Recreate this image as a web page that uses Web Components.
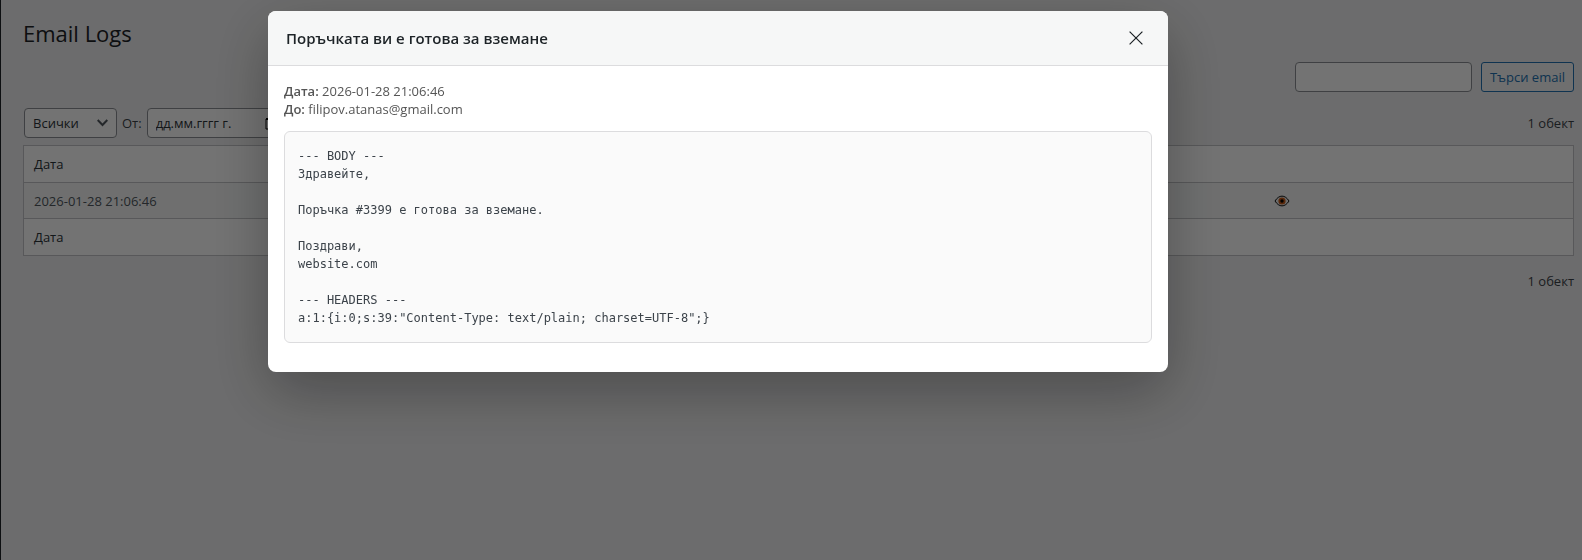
<!DOCTYPE html>
<html lang="bg">
<head>
    <meta charset="UTF-8">
    <meta name="viewport" content="width=device-width, initial-scale=1.0">
    <title>Email Logs</title>
    <style>
      body{
        margin: 0;
        min-height: 100vh;
        display: flex;
        background: #f0f0f1;
        color: #3c434a;
        font: 13px/18px "Open Sans", "Noto Sans", sans-serif;
      }
    </style>
</head>
<body>
  <log-page heading="Email Logs">
    <log-search slot="search" label="Търси email"></log-search>
    <log-filters slot="filters"></log-filters>
    <span slot="count">1 обект</span>
    <log-table date="2026-01-28 21:06:46"></log-table>
    <span slot="total">1 обект</span>
  </log-page>

  <log-modal>
    <span slot="title">Поръчката ви е готова за вземане</span>
    <log-field slot="meta" label="Дата:">2026-01-28 21:06:46</log-field>
    <log-field slot="meta" label="До:">filipov.atanas@gmail.com</log-field>
    <log-source>--- BODY ---
Здравейте,

Поръчка #3399 е готова за вземане.

Поздрави,
website.com

--- HEADERS ---
a:1:{i:0;s:39:"Content-Type: text/plain; charset=UTF-8";}</log-source>
  </log-modal>

  <script>
    class LogPage extends HTMLElement{
      constructor(){
        super();
        this.attachShadow({mode:'open'}).innerHTML = `
          <style>
            :host{
              flex: 1;
              box-sizing: border-box;
              min-width: 0;
              padding: 16px 8px 16px 22px;
              border-left: 1px solid #1d2327;
            }
            h1{
              margin: 0 0 12px;
              font-size: 22px;
              line-height: 34px;
              font-weight: 400;
              color: #1d2327;
            }
            .search{
              display: flex;
              justify-content: flex-end;
              margin-bottom: 16px;
            }
            .nav{
              display: flex;
              justify-content: space-between;
              align-items: center;
              min-height: 30px;
            }
            .top{ margin-bottom: 7px; }
            .bottom{ margin-top: 10px; }
          </style>
          <h1></h1>
          <div class="search"><slot name="search"></slot></div>
          <div class="nav top"><slot name="filters"></slot><slot name="count"></slot></div>
          <slot></slot>
          <div class="nav bottom"><span></span><slot name="total"></slot></div>`;
      }

      connectedCallback(){
        this.shadowRoot.querySelector('h1').textContent = this.getAttribute('heading');
      }
    }
    customElements.define('log-page', LogPage);

    class LogSearch extends HTMLElement{
      constructor(){
        super();
        this.attachShadow({mode:'open'}).innerHTML = `
          <style>
            :host{ display: block; }
            form{ display: flex; gap: 9px; }
            input, button{
              box-sizing: border-box;
              height: 30px;
              margin: 0;
              border-radius: 4px;
              font: inherit;
            }
            input{
              width: 177px;
              padding: 0 8px;
              border: 1px solid #8c8f94;
              background: #fff;
            }
            button{
              min-width: 92px;
              padding: 0 8px;
              border: 1px solid #2271b1;
              border-radius: 3px;
              background: #f6f7f7;
              color: #2271b1;
              white-space: nowrap;
            }
          </style>
          <form><input type="search"><button type="button"></button></form>`;
      }

      connectedCallback(){
        let label = this.getAttribute('label');
        this.shadowRoot.querySelector('input').setAttribute('aria-label', label);
        this.shadowRoot.querySelector('button').textContent = label;
      }
    }
    customElements.define('log-search', LogSearch);

    class LogFilters extends HTMLElement{
      constructor(){
        super();
        this.attachShadow({mode:'open'}).innerHTML = `
          <style>
            :host{
              display: flex;
              align-items: center;
              gap: 5px;
              padding-left: 1px;
            }
            .box{
              box-sizing: border-box;
              display: grid;
              align-items: center;
              height: 30px;
              border: 1px solid #8c8f94;
              border-radius: 4px;
              background: #fff;
              color: #2c3338;
            }
            .box > *{ grid-area: 1 / 1; }
            .pick{ width: 93px; }
            .day{ width: 142px; }
            select, input{
              appearance: none;
              box-sizing: border-box;
              width: 100%;
              height: 28px;
              margin: 0;
              padding: 0 8px;
              border: 0;
              background: none;
              color: inherit;
              font: inherit;
            }
            input::placeholder{ color: inherit; opacity: 1; }
            svg{ justify-self: end; margin-right: 8px; pointer-events: none; }
          </style>
          <div class="box pick">
            <select aria-label="Статус"><option>Всички</option></select>
            <svg width="11" height="8" viewBox="0 0 11 8" fill="none" stroke="#50575e" stroke-width="2"><path d="M.7 1l4.8 5 4.8-5"/></svg>
          </div>
          <label for="from">От:</label>
          <div class="box day">
            <input id="from" type="text" placeholder="дд.мм.гггг г.">
            <svg width="15" height="14" viewBox="0 0 15 14" fill="none" stroke="#000"><path d="M1 3h13v10H1z"/><path d="M4 0v3M11 0v3M1 3h13" stroke-width="2"/></svg>
          </div>`;
      }
    }
    customElements.define('log-filters', LogFilters);

    class LogTable extends HTMLElement{
      constructor(){
        super();
        this.attachShadow({mode:'open'}).innerHTML = `
          <style>
            :host{ display: block; }
            table{
              width: 100%;
              table-layout: fixed;
              border-collapse: collapse;
              border: 1px solid #c3c4c7;
              background: #fff;
            }
            th, td{
              box-sizing: border-box;
              height: 36px;
              padding: 0 10px;
              text-align: left;
              font-weight: 400;
            }
            th{ height: 37px; color: #2c3338; }
            tbody tr{
              background: #f6f7f7;
              border: solid #c3c4c7;
              border-width: 1px 0;
            }
            td{ color: #50575e; }
            button{
              display: block;
              margin: 0;
              padding: 0;
              border: 0;
              background: none;
            }
            svg{ display: block; }
          </style>
          <table>
            <thead><tr><th scope="col">Дата</th><th></th><th></th><th></th><th></th></tr></thead>
            <tbody><tr>
              <td class="date"></td><td></td><td></td><td></td>
              <td><button type="button" aria-label="Преглед">
                <svg width="16" height="12" viewBox="0 0 16 12">
                  <path d="M1 6c4-6.500 10-6.500 14 0-4 6.500-10 6.500-14 0z" fill="#eee" stroke="#111"/>
                  <circle cx="8" cy="6" r="3.600" fill="#c85a17"/>
                  <circle cx="8" cy="6" r="1.700" fill="#000"/>
                </svg>
              </button></td>
            </tr></tbody>
            <tfoot><tr><th scope="col">Дата</th><th></th><th></th><th></th><th></th></tr></tfoot>
          </table>`;
      }

      connectedCallback(){
        this.shadowRoot.querySelector('.date').textContent = this.getAttribute('date');
      }
    }
    customElements.define('log-table', LogTable);

    class LogModal extends HTMLElement{
      constructor(){
        super();
        this.attachShadow({mode:'open'}).innerHTML = `
          <style>
            :host{
              position: fixed;
              inset: 0;
              display: flex;
              justify-content: center;
              align-items: flex-start;
              padding: 11px 146px 11px 0;
              background: rgba(0, 0, 0, .55);
            }
            :host([hidden]){ display: none; }
            section{
              width: 100%;
              max-width: 900px;
              overflow: hidden;
              border-radius: 8px;
              background: #fff;
              box-shadow: 0 20px 60px rgba(0, 0, 0, .3);
            }
            header{
              display: flex;
              justify-content: space-between;
              align-items: center;
              padding: 12px 16px 12px 18px;
              border-bottom: 1px solid #dcdcde;
              background: #f6f7f7;
            }
            h2{
              margin: 0;
              font-size: 15px;
              line-height: 30px;
              font-weight: 600;
              color: #1d2327;
            }
            button{
              display: grid;
              place-items: center;
              width: 32px;
              height: 30px;
              margin: 0;
              padding: 0;
              border: 0;
              background: none;
            }
            .body{ padding: 16px 16px 29px; }
            .meta{ margin-bottom: 13px; color: #555; }
          </style>
          <section role="dialog" aria-modal="true" aria-labelledby="title">
            <header>
              <h2 id="title"><slot name="title"></slot></h2>
              <button type="button" aria-label="Затвори">
                <svg width="14" height="14" viewBox="0 0 14 14" fill="none" stroke="#1d2327" stroke-width="1.200"><path d="M.6.600l12.800 12.800M13.400.600L.6 13.400"/></svg>
              </button>
            </header>
            <div class="body">
              <div class="meta"><slot name="meta"></slot></div>
              <slot></slot>
            </div>
          </section>`;

        this.shadowRoot.querySelector('button').addEventListener('click', e => {
          this.hidden = true;
        });
      }
    }
    customElements.define('log-modal', LogModal);

    class LogField extends HTMLElement{
      constructor(){
        super();
        this.attachShadow({mode:'open'}).innerHTML = `
          <style>
            :host{ display: block; }
            b{ font-weight: 600; }
          </style>
          <b></b> <slot></slot>`;
      }

      connectedCallback(){
        this.shadowRoot.querySelector('b').textContent = this.getAttribute('label');
      }
    }
    customElements.define('log-field', LogField);

    class LogSource extends HTMLElement{
      constructor(){
        super();
        this.attachShadow({mode:'open'}).innerHTML = `
          <style>
            :host{ display: block; }
            pre{
              margin: 0;
              padding: 15px 13px;
              border: 1px solid #dcdcde;
              border-radius: 6px;
              background: #fafafa;
              color: #3c434a;
              font: 12px/18px "DejaVu Sans Mono", monospace;
              white-space: pre-wrap;
            }
          </style>
          <pre><slot></slot></pre>`;
      }
    }
    customElements.define('log-source', LogSource);
  </script>
</body>
</html>
